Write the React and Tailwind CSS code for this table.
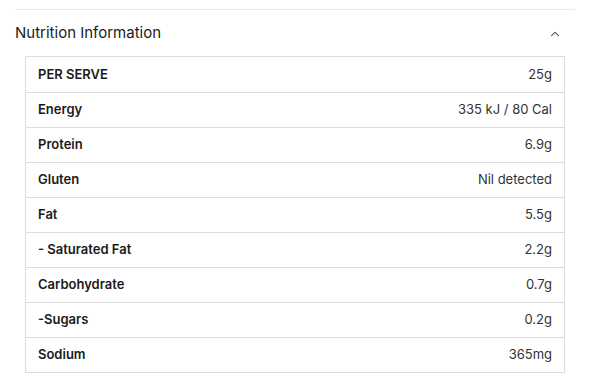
import { ChevronUp } from 'lucide-react';

const ROWS = [
  ['PER SERVE', '25g'],
  ['Energy', '335 kJ / 80 Cal'],
  ['Protein', '6.9g'],
  ['Gluten', 'Nil detected'],
  ['Fat', '5.5g'],
  ['- Saturated Fat', '2.2g'],
  ['Carbohydrate', '0.7g'],
  ['-Sugars', '0.2g'],
  ['Sodium', '365mg'],
];

export default function App() {
  return (
    <div className="w-[600px] h-[382px] bg-white font-['Inter',sans-serif] text-[#1f1f1f] overflow-hidden">
      <div className="ml-[15px] w-[560px] mt-[9px] border-t border-[#ebebeb]">
        <div className="flex items-center justify-between h-[46px] pt-[1px]">
          <span className="text-[15px] text-[#222]">Nutrition Information</span>
          <ChevronUp size={14} strokeWidth={1.75} className="mr-[13px] text-[#333]" />
        </div>
        <div className="mx-[10px] border border-[#dcdcdc]">
          {ROWS.map(([label, value], i) => (
            <div
              key={label}
              className={`flex items-center justify-between h-[35px] px-[12px] text-[13px] ${i > 0 ? 'border-t border-[#dcdcdc]' : ''}`}
            >
              <span className="font-semibold text-[#1a1a1a]">{label}</span>
              <span className="text-[#333]">{value}</span>
            </div>
          ))}
        </div>
      </div>
    </div>
  );
}
